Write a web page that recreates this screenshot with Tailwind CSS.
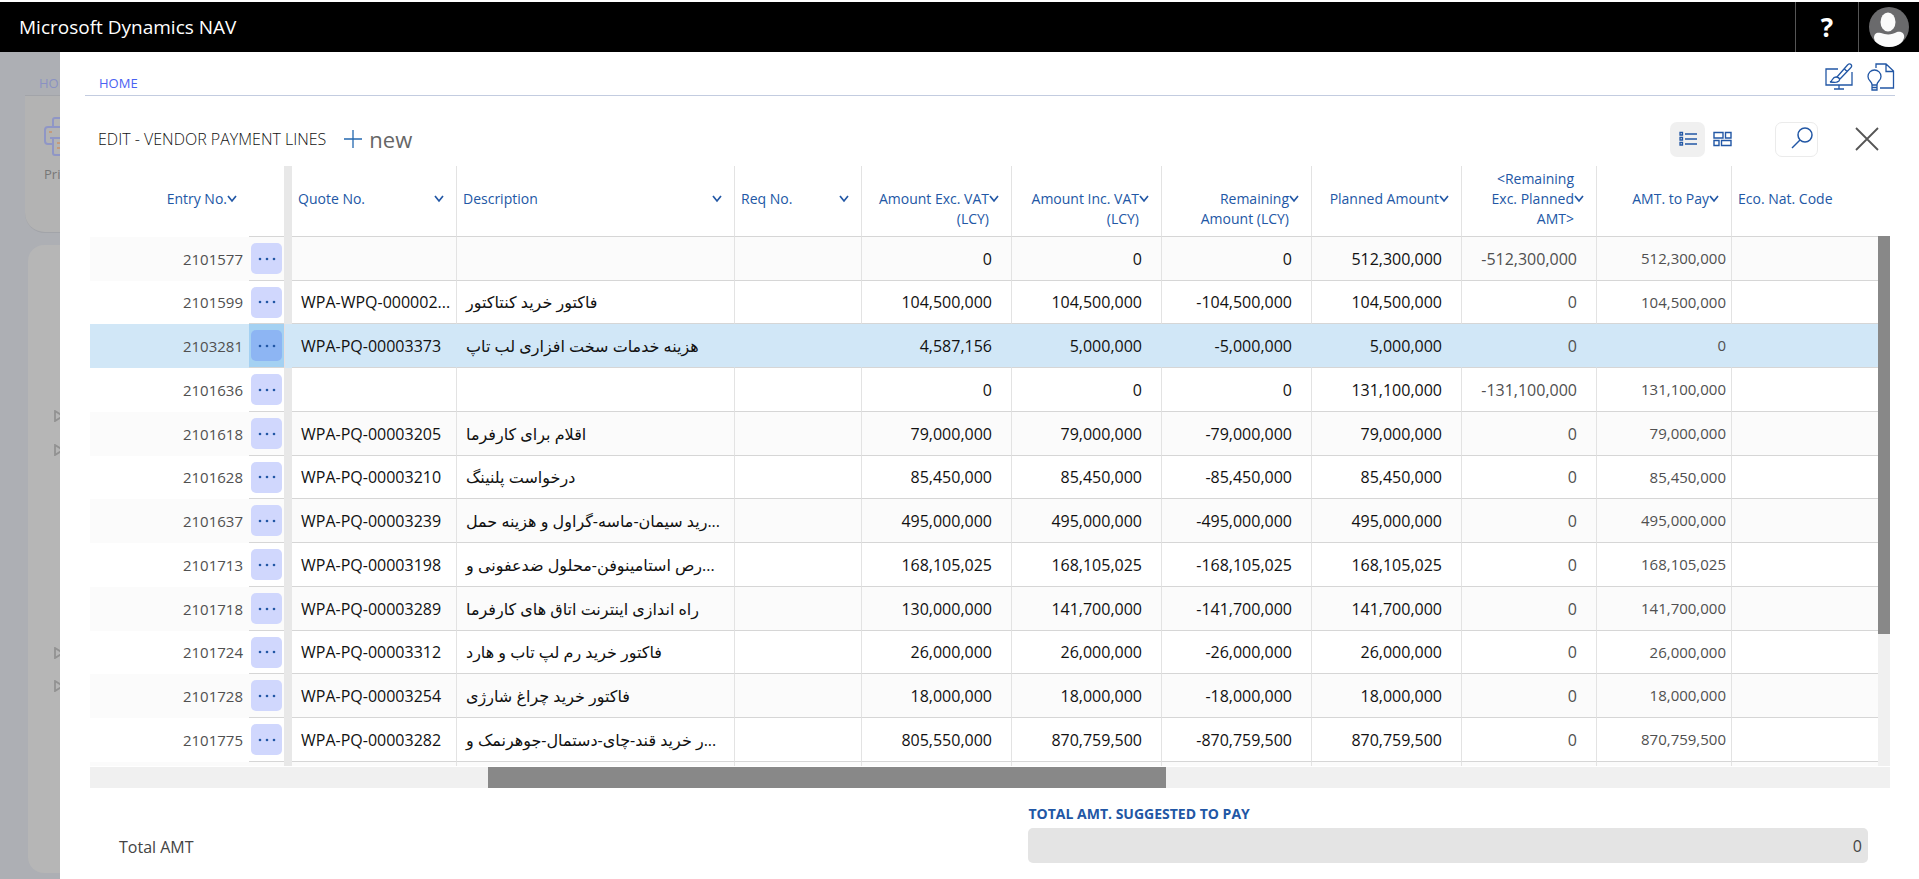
<!DOCTYPE html>
<html lang="en">
<head>
<meta charset="utf-8">
<title>Microsoft Dynamics NAV</title>
<script src="https://cdn.jsdelivr.net/npm/@tailwindcss/browser@4"></script>
</head>
<body class="flex h-screen flex-col overflow-hidden bg-white pt-[2px] font-['Open_Sans','DejaVu_Sans',sans-serif] text-[15px] text-[#111]">
<header class="flex h-[50px] shrink-0 items-center bg-black text-white">
  <h1 class="flex-1 pt-px pl-[19px] text-[19px]">Microsoft Dynamics NAV</h1>
  <button aria-label="Help" class="h-full w-[63px] border-l border-[#555] text-[26px] font-bold">?</button>
  <button aria-label="Account" class="flex h-full w-[61px] items-center justify-center border-l border-[#555]">
    <svg width="40" height="40" viewBox="0 0 40 40"><circle cx="20" cy="20" r="20" fill="#6a6a6c"/><ellipse cx="19" cy="15" rx="7.500" ry="9.500" fill="#fafafa"/><path d="M5 31C5 26 8 25 12 26C17 28 23 28 28 25C33 24 36 27 35 31Q34 34 32 36Q27 40 20 40Q13 40 8 36Q5 34 5 31Z" fill="#fafafa"/></svg>
  </button>
</header>
<div class="flex min-h-0 flex-1">
  <aside class="flex w-[60px] shrink-0 flex-col overflow-hidden bg-[#adafb4] pb-[6px]">
    <div class="flex h-[43px] shrink-0 items-center pt-5 pl-[39px] text-[13px] text-[#8a92c2]">HOME</div>
    <div class="ml-[25px] h-[138px] w-20 shrink-0 rounded-bl-[20px] border-t border-b border-[#a2a4a9] bg-[#b3b3b3] pt-[21px] pl-[19px] text-[13px] text-[#777]">
      <svg class="mb-[8px]" width="40" height="40" viewBox="0 0 40 40" fill="none" stroke="#8f96c6" stroke-width="2"><path d="M9 9V3Q9 1 11 1H29Q31 1 31 3V9M9 27H4Q1 27 1 24V13Q1 10 4 10H36Q39 10 39 13V24Q39 27 36 27H31M6 21H34M9 21V36Q9 38 11 38H29Q31 38 31 36V21"/><path d="M5 15H8M13 26H27M13 31H27" stroke="#c49a7c"/></svg>
      Print
    </div>
    <div class="mt-[12px] ml-[28px] flex w-20 flex-1 flex-col rounded-l-[16px] bg-[#b6b6b6] pt-[165px] pl-[26px] text-[#929292]">
      <svg width="10" height="12" viewBox="0 0 10 12" fill="none" stroke="currentColor" stroke-width="1.800"><path d="M1 1L9 6L1 11Z"/></svg>
      <svg class="mt-[22px]" width="10" height="12" viewBox="0 0 10 12" fill="none" stroke="currentColor" stroke-width="1.800"><path d="M1 1L9 6L1 11Z"/></svg>
      <svg class="mt-[191px]" width="10" height="12" viewBox="0 0 10 12" fill="none" stroke="currentColor" stroke-width="1.800"><path d="M1 1L9 6L1 11Z"/></svg>
      <svg class="mt-[21px]" width="10" height="12" viewBox="0 0 10 12" fill="none" stroke="currentColor" stroke-width="1.800"><path d="M1 1L9 6L1 11Z"/></svg>
    </div>
  </aside>
  <main class="flex min-w-0 flex-1 flex-col">
    <nav class="mr-6 ml-[25px] flex h-[44px] shrink-0 items-center border-b border-[#c3cce0] pl-[14px]">
      <a href="#" class="flex-1 pt-5 text-[13px] text-[#4a62f2]">HOME</a>
      <button aria-label="Personalize" class="mr-[14px] pt-[6px]">
        <svg width="28" height="28" viewBox="0 0 28 28" fill="none" stroke="#2257a5" stroke-width="1.300"><path d="M13 6H1V22H27V9M14 22V26M9 26H19M5 19C8 18 7 14 11 14C15 14 16 18 12 19C10 20 8 19 5 19ZM12 14L22.500 2Q24.500 0 26 1.500Q27.500 3 25.500 5L15 16M19.500 6L22 8.500"/></svg>
      </button>
      <button aria-label="Tips" class="pt-[6px]">
        <svg width="28" height="28" viewBox="0 0 28 28" fill="none" stroke="#2257a5" stroke-width="1.300"><path d="M9 5V1H19L26.500 8V25H13M19 1V8.500H26.500M5 22C5 18 1 18 1 13.500A6.500 6.500 0 0 1 14 13.500C14 18 10 18 10 22ZM5 22V27H10V22M5 24.500H10"/></svg>
      </button>
    </nav>
    <div class="flex h-[70px] shrink-0 items-center pt-[16px] pr-[40px] pl-[38px]">
      <h2 class="text-[16px] font-light">EDIT - VENDOR PAYMENT LINES</h2>
      <button class="ml-[18px] flex flex-1 items-center gap-[7px] text-left text-[22px] text-[#666]">
        <svg width="18" height="18" viewBox="0 0 18 18" stroke="#2468b0" stroke-width="1.300"><path d="M9 0V18M0 9H18"/></svg>new
      </button>
      <button aria-label="List view" class="flex size-[35px] items-center justify-center rounded-[7px] bg-[#f0f0f0]">
        <svg width="18" height="16" viewBox="0 0 18 16" fill="none" stroke="#2257a5" stroke-width="1.300"><path d="M1 1.500H3.500V4H1ZM1 6.500H3.500V9H1ZM1 11.500H3.500V14H1ZM6 3H18M6 8H18M6 13H18"/></svg>
      </button>
      <button aria-label="Tile view" class="ml-2">
        <svg width="19" height="16" viewBox="0 0 19 16" fill="none" stroke="#2257a5" stroke-width="1.400"><path d="M1 1.500H10V7H1ZM12.500 1.500H18V7H12.500ZM1 9.500H6V14.500H1ZM8.500 9.500H18V14.500H8.500Z"/></svg>
      </button>
      <button aria-label="Search" class="mr-[37px] ml-[43px] flex h-[35px] w-[43px] items-center justify-end rounded-[7px] border border-[#ebebeb] pr-1 pb-[2px]">
        <svg width="22" height="22" viewBox="0 0 22 22" fill="none" stroke="#2257a5" stroke-width="1.500"><circle cx="14" cy="8" r="7"/><path d="M9 13L1 21"/></svg>
      </button>
      <button aria-label="Close">
        <svg width="24" height="24" viewBox="0 0 24 24" stroke="#555" stroke-width="1.800"><path d="M1 1L23 23M23 1L1 23"/></svg>
      </button>
    </div>
    <div class="mr-[29px] ml-[30px] flex min-h-0 flex-1 overflow-hidden">
      <div class="min-w-0 flex-1 overflow-hidden">
        <table class="w-full table-fixed border-separate border-spacing-0">
          <colgroup><col class="w-[159px]"><col class="w-[35px]"><col class="w-[8px]"><col class="w-[165px]"><col class="w-[278px]"><col class="w-[127px]"><col class="w-[150px]"><col class="w-[150px]"><col class="w-[150px]"><col class="w-[150px]"><col class="w-[135px]"><col class="w-[135px]"><col></colgroup>
          <thead><tr id="head" class="h-[71px] text-[14px] leading-5 text-[#2257a5]"></tr></thead>
          <tbody id="rows"></tbody>
        </table>
      </div>
      <div class="mt-[70px] w-3 shrink-0 bg-[#f0f0f0]"><div class="h-3/4 bg-[#888]"></div></div>
    </div>
    <div class="mt-px mr-[29px] ml-[30px] flex h-[21px] shrink-0 bg-[#f0f0f0]"><div class="ml-[22.1%] w-[37.7%] bg-[#888]"></div></div>
    <footer class="flex h-[91px] shrink-0 items-start pt-[16px] pr-[51px] pl-[59px]">
      <div class="flex-1 pt-[31px] text-[16px] leading-6 text-[#444]">Total AMT</div>
      <div class="flex w-[48%] flex-col">
        <label for="total" class="text-[14px] leading-5 font-bold text-[#2257a5]">TOTAL AMT. SUGGESTED TO PAY</label>
        <input id="total" value="0" readonly class="mt-[4px] h-[35px] w-full rounded-[5px] bg-[#e4e4e4] pr-[6px] text-right text-[16px] text-[#444]">
      </div>
    </footer>
  </main>
</div>
<script>
const heads = [
  ['Entry No.', 1, 1], ['Quote No.', 0, 1], ['Description', 0, 1], ['Req No.', 0, 1],
  ['Amount Exc. VAT<br>(LCY)', 1, 1], ['Amount Inc. VAT<br>(LCY)', 1, 1], ['Remaining<br>Amount (LCY)', 1, 1],
  ['Planned Amount', 1, 1], ['&lt;Remaining<br>Exc. Planned<br>AMT&gt;', 1, 1], ['AMT. to Pay', 1, 1], ['Eco. Nat. Code', 0, 0]
];
const chev = '<svg class="absolute top-[29px] right-[12px]" width="10" height="8" viewBox="0 0 10 8" fill="none" stroke="#2257a5" stroke-width="1.700"><path d="M1 1L5 6L9 1"/></svg>';
document.getElementById('head').innerHTML = heads.map(([t, right, c], i) => {
  const tall = t.startsWith('&lt;') ? 'pt-[3px]' : 'pt-[23px]';
  const al = right ? 'text-right pr-[22px]' : 'text-left pl-[6px]';
  const line = i === 0 ? '' : 'border-b border-b-[#d6d6d6]';
  const side = i === 0 || i === 10 ? '' : 'border-r border-r-[#e3e3e3]';
  const th = `<th class="relative align-top font-normal whitespace-nowrap ${tall} ${al} ${line} ${side}">${t}${c ? chev : ''}</th>`;
  return i === 0 ? th + '<td class="border-b border-b-[#d6d6d6]"></td><td class="bg-[#e8e8e8]"></td>' : th;
}).join('');

const data = [
  ['2101577', '', '', '0', '0', '0', '512,300,000', '-512,300,000', '512,300,000'],
  ['2101599', 'WPA-WPQ-000002...', 'فاکتور خرید کنتاکتور', '104,500,000', '104,500,000', '-104,500,000', '104,500,000', '0', '104,500,000'],
  ['2103281', 'WPA-PQ-00003373', 'هزینه خدمات سخت افزاری لب تاپ', '4,587,156', '5,000,000', '-5,000,000', '5,000,000', '0', '0'],
  ['2101636', '', '', '0', '0', '0', '131,100,000', '-131,100,000', '131,100,000'],
  ['2101618', 'WPA-PQ-00003205', 'اقلام برای کارفرما', '79,000,000', '79,000,000', '-79,000,000', '79,000,000', '0', '79,000,000'],
  ['2101628', 'WPA-PQ-00003210', 'درخواست پلنینگ', '85,450,000', '85,450,000', '-85,450,000', '85,450,000', '0', '85,450,000'],
  ['2101637', 'WPA-PQ-00003239', '...رید سیمان-ماسه-گراول و هزینه حمل', '495,000,000', '495,000,000', '-495,000,000', '495,000,000', '0', '495,000,000'],
  ['2101713', 'WPA-PQ-00003198', '...رص استامینوفن-محلول ضدعفونی و', '168,105,025', '168,105,025', '-168,105,025', '168,105,025', '0', '168,105,025'],
  ['2101718', 'WPA-PQ-00003289', 'راه اندازی اینترنت اتاق های کارفرما', '130,000,000', '141,700,000', '-141,700,000', '141,700,000', '0', '141,700,000'],
  ['2101724', 'WPA-PQ-00003312', 'فاکتور خرید رم لپ تاب و هارد', '26,000,000', '26,000,000', '-26,000,000', '26,000,000', '0', '26,000,000'],
  ['2101728', 'WPA-PQ-00003254', 'فاکتور خرید چراغ شارژی', '18,000,000', '18,000,000', '-18,000,000', '18,000,000', '0', '18,000,000'],
  ['2101775', 'WPA-PQ-00003282', '...ر خرید قند-چای-دستمال-جوهرنمک و', '805,550,000', '870,759,500', '-870,759,500', '870,759,500', '0', '870,759,500'],
  ['', '', '', '', '', '', '', '', '']
];
const dots = '<svg width="18" height="4" viewBox="0 0 18 4" fill="#2257a5"><circle cx="2" cy="2" r="1.300"/><circle cx="9" cy="2" r="1.300"/><circle cx="16" cy="2" r="1.300"/></svg>';
document.getElementById('rows').innerHTML = data.map((r, i) => {
  const sel = i === 2, last = i === 12;
  const bg = sel ? 'bg-[#d1e7f7]' : i % 2 ? 'bg-white' : 'bg-[#fbfbfb]';
  const b = 'border-b border-b-[#d6d6d6] whitespace-nowrap';
  const v = sel ? 'border-r border-r-[#d1e7f7]' : 'border-r border-r-[#e3e3e3]';
  const btn = last ? '' : `<button aria-label="More options" class="flex h-[31px] w-[31px] items-center justify-center rounded-[5px] ${sel ? 'bg-[#8db5f3]' : 'bg-[#d0d7fd]'}">${dots}</button>`;
  const num = (t, c) => `<td class="${b} ${c} text-right">${t}</td>`;
  return `<tr class="${bg} h-11 [&:nth-child(4n+2)]:h-[43px]">
    <td class="pr-[6px] text-right text-[#505050]">${r[0]}</td>
    <td class="${b} pl-[2px] ${sel ? 'bg-[#a4d1f2]' : ''}">${btn}</td>
    <td class="${sel ? 'border-l border-l-[#e8dfe0]' : 'bg-[#e8e8e8]'}"></td>
    <td class="${b} ${v} pl-[9px] text-[16px]">${r[1]}</td>
    <td class="${b} ${v} px-[9px]"><div dir="rtl" class="w-fit text-[16px]">${r[2]}</div></td>
    <td class="${b} ${v}"></td>` +
    [3, 4, 5, 6].map(k => num(r[k], v + ' pr-[19px] text-[16px]')).join('') +
    num(r[7], v + ' pr-[19px] text-[16px] text-[#505050]') + num(r[8], v + ' pr-[5px] text-[#505050]') + `<td class="${b}"></td></tr>`;
}).join('');
</script>
</body>
</html>
